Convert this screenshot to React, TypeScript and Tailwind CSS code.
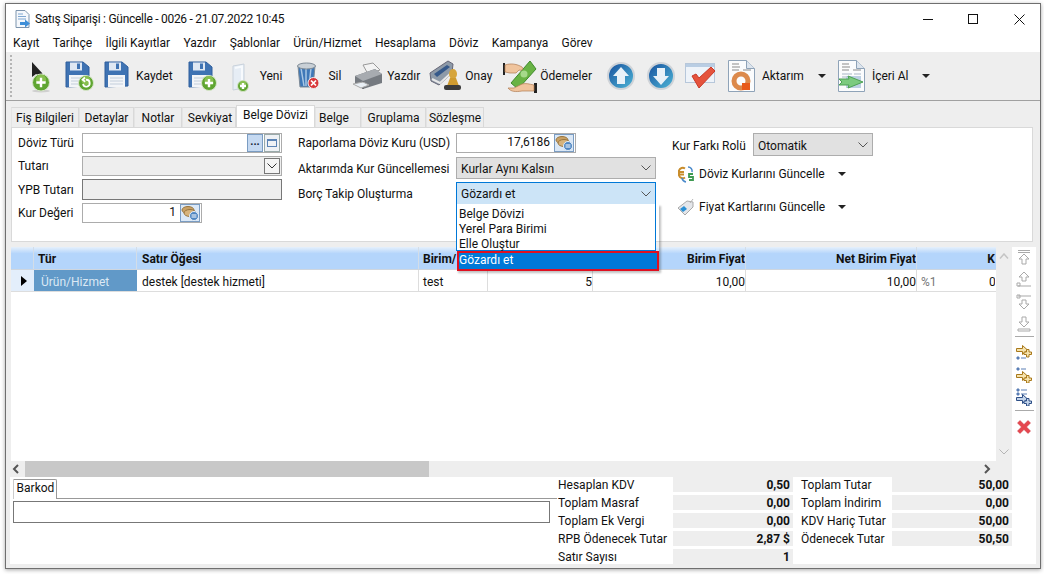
import React from "react";

const F = "font-['Roboto','Liberation_Sans',sans-serif]";

function Badge({ cx, cy, r = 7, kind = "plus" }: { cx: number; cy: number; r?: number; kind?: "plus" | "redo" }) {
  return (
    <g>
      <circle cx={cx} cy={cy} r={r} fill="#5fa531" stroke="#d5e4c8" strokeWidth="1" />
      <circle cx={cx} cy={cy - r / 3} r={r * 0.6} fill="#9acb5c" opacity="0.7" />
      {kind === "plus" ? (
        <path d={`M${cx - r * 0.55} ${cy}h${r * 1.1}M${cx} ${cy - r * 0.55}v${r * 1.1}`} stroke="#fff" strokeWidth="2.4" />
      ) : (
        <path d={`M${cx - 3} ${cy + 1}a3.4 3.4 0 1 0 3-4.2M${cx - 1} ${cy - 5.5}l-2.4 2.3 2.6 2`} stroke="#fff" strokeWidth="1.8" fill="none" />
      )}
    </g>
  );
}

function Floppy({ badge }: { badge?: "plus" | "redo" }) {
  return (
    <svg width="29" height="30" viewBox="0 0 29 30" className="shrink-0 block">
      <path d="M1 1h17l6 5v19l-23 1z" fill="#3f73b3" stroke="#2f5f9d" />
      <rect x="5" y="1.5" width="12" height="8" fill="#dfe8f3" />
      <rect x="12" y="2.5" width="3" height="5.5" fill="#3f73b3" />
      <rect x="4" y="14" width="17" height="12" fill="#f3f5f8" />
      <path d="M6 17h13M6 20h13M6 23h13" stroke="#c3cedb" />
      {badge && <Badge cx={21} cy={22} r={7.5} kind={badge} />}
    </svg>
  );
}

function PointerAdd() {
  return (
    <svg width="24" height="32" viewBox="0 0 24 32" className="shrink-0 block">
      <path d="M2 1v15l4-3 3 1.5 3.500-2z" fill="#222" />
      <ellipse cx="11" cy="30" rx="9" ry="1.5" fill="#cfcfcf" />
      <Badge cx={11} cy={21.5} r={8.5} />
    </svg>
  );
}

function BlankAdd() {
  return (
    <svg width="20" height="30" viewBox="0 0 20 30" className="shrink-0 block">
      <path d="M2 3l11-2v24l-11 2z" fill="#e6edf5" stroke="#c9d2dc" />
      <path d="M4 5l7-1.500v18" fill="none" stroke="#f7fafd" strokeWidth="2" />
      <Badge cx={12} cy={23} r={5.5} />
    </svg>
  );
}

function Trash() {
  return (
    <svg width="24" height="30" viewBox="0 0 24 30" className="shrink-0 block">
      <path d="M2 5h17l-2 21H4z" fill="#3e78b8" stroke="#7f8b96" />
      <path d="M5 7l3 18M10 7v18M15 7l-2 18" stroke="#a7c6e4" strokeWidth="1.5" />
      <ellipse cx="10.5" cy="5" rx="9" ry="3" fill="#c9d0d6" stroke="#7f8b96" />
      <circle cx="17.5" cy="22" r="5.5" fill="#d8373a" stroke="#eee" />
      <path d="M15 19.500l5 5M20 19.500l-5 5" stroke="#fff" strokeWidth="1.7" />
    </svg>
  );
}

function Printer() {
  return (
    <svg width="32" height="28" viewBox="0 0 32 28" className="shrink-0 block">
      <path d="M11 3l10-2 7 7-12 4z" fill="#f3f3f3" stroke="#999" />
      <path d="M3 14l20-7 7 5v9L11 27 3 21z" fill="#757a80" />
      <path d="M3 14l8 5 19-7-7-5z" fill="#a7abb0" />
      <path d="M11 19v8" stroke="#4e5156" />
      <path d="M1 22l8 4 8-3-6-3z" fill="#e8eef4" stroke="#aaa" />
    </svg>
  );
}

function Stamp() {
  return (
    <svg width="33" height="32" viewBox="0 0 33 32" className="shrink-0 block">
      <path d="M1 13L19 1l5 3-1 9-13 12-8-4z" fill="#8e9aa8" stroke="#667" />
      <path d="M5 14l13-9 3 2-13 10z" fill="#36598a" />
      <path d="M3 19l8 4 11-10" stroke="#e8e8e8" strokeWidth="2" fill="none" />
      <ellipse cx="24" cy="14" rx="4" ry="5" fill="#d6a53c" />
      <path d="M21 18h6l3 8H18z" fill="#cf9b30" />
      <rect x="15" y="25" width="17" height="5" rx="2" fill="#3b3b3b" />
    </svg>
  );
}

function Money() {
  return (
    <svg width="34" height="34" viewBox="0 0 34 34" className="shrink-0 block">
      <path d="M8 24L27 2l6 8-18 20z" fill="#69b344" stroke="#3f8a2c" />
      <circle cx="21" cy="15" r="3.5" fill="#a6d98a" />
      <rect x="0" y="4" width="2" height="12" fill="#222" />
      <path d="M2 6c6-2 12-1 17 2 2 2 0 4-3 3l-3 3H7l-5-1z" fill="#f0c49d" stroke="#b07b52" strokeWidth="0.7" />
      <rect x="31" y="24" width="3" height="10" fill="#222" />
      <path d="M31 26c-5-1-8-2-12-1l-8 4-6 0c3 4 8 4 14 3l12 0z" fill="#f0c49d" stroke="#b07b52" strokeWidth="0.7" />
    </svg>
  );
}

function Round({ down }: { down?: boolean }) {
  const id = down ? "rd" : "ru";
  return (
    <svg width="28" height="28" viewBox="0 0 28 28" className="shrink-0 block">
      <defs>
        <linearGradient id={id} x1="0" y1="0" x2="1" y2="1">
          <stop offset="0" stopColor="#174f9d" />
          <stop offset="1" stopColor="#4fb8d8" />
        </linearGradient>
      </defs>
      <circle cx="14" cy="14" r="13" fill={`url(#${id})`} stroke="#cfd3d8" strokeWidth="2" />
      {down ? <path d="M10 6h8v8h4l-8 9-8-9h4z" fill="#e9f1f8" /> : <path d="M14 5l8 9h-4v8h-8v-8H6z" fill="#e9f1f8" />}
    </svg>
  );
}

function CheckWindow() {
  return (
    <svg width="32" height="28" viewBox="0 0 32 28" className="shrink-0 block">
      <rect x="0.5" y="1.5" width="29" height="19" fill="#eef3f9" stroke="#b7c7da" />
      <rect x="1" y="2" width="28" height="3" fill="#b9cde3" />
      <path d="M7 14l4-2 3 4 12-11 4 4-16 17z" fill="#e5533d" stroke="#c83a29" />
    </svg>
  );
}

function DocBase({ children }: { children: React.ReactNode }) {
  return (
    <svg width="27" height="32" viewBox="0 0 27 32" className="shrink-0 block">
      <path d="M0.5 0.500h18l8 8v23h-26z" fill="#fbfcfd" stroke="#8fa3b8" />
      <path d="M18.500 0.500v8h8" fill="#dde5ee" stroke="#8fa3b8" />
      <path d="M4 4h7M4 7h8M4 10h7M15 10h8" stroke="#8b8b8b" />
      {children}
    </svg>
  );
}

function Coins() {
  return (
    <svg width="18" height="18" viewBox="0 0 18 18" className="block">
      <ellipse cx="7" cy="6" rx="6" ry="3.5" fill="#c9a165" stroke="#98753f" />
      <ellipse cx="9" cy="9" rx="6" ry="3.5" fill="#d7b37b" stroke="#98753f" />
      <circle cx="13" cy="12" r="4.5" fill="#4e86c2" stroke="#e4eef8" />
      <path d="M10.500 11h5M15.500 13h-5" stroke="#fff" />
    </svg>
  );
}

function CoinButton() {
  return (
    <div className="w-[20px] h-[18px] mr-[1px] border border-[#7a9cc2] bg-[#dbe8f6] flex items-center justify-center shrink-0">
      <Coins />
    </div>
  );
}

function Caret({ ml }: { ml: string }) {
  return <span className={`${ml} block w-0 h-0 border-x-[4px] border-x-transparent border-t-[4px] border-t-[#222] shrink-0`} />;
}

function Chevron({ color = "#555" }: { color?: string }) {
  return (
    <svg width="10" height="6" viewBox="0 0 10 6" className="shrink-0 block">
      <path d="M0.5 0.500L5 5l4.500-4.500" fill="none" stroke={color} />
    </svg>
  );
}

const MENU = ["Kayıt", "Tarihçe", "İlgili Kayıtlar", "Yazdır", "Şablonlar", "Ürün/Hizmet", "Hesaplama", "Döviz", "Kampanya", "Görev"];
const TABS = [
  { t: "Fiş Bilgileri", w: "w-[68px]" },
  { t: "Detaylar", w: "w-[55px]" },
  { t: "Notlar", w: "w-[48px]" },
  { t: "Sevkiyat", w: "w-[54px] pl-[2px]" },
  { t: "Belge Dövizi", w: "w-[79px]", active: true },
  { t: "Belge", w: "w-[46px] pr-[8px]" },
  { t: "Gruplama", w: "w-[65px]" },
  { t: "Sözleşme", w: "w-[58px]" },
];
const TOTALS = [
  ["Hesaplan KDV", "0,50", "Toplam Tutar", "50,00"],
  ["Toplam Masraf", "0,00", "Toplam İndirim", "0,00"],
  ["Toplam Ek Vergi", "0,00", "KDV Hariç Tutar", "50,00"],
  ["RPB Ödenecek Tutar", "2,87 $", "Ödenecek Tutar", "50,50"],
  ["Satır Sayısı", "1", "", ""],
];

function Toolbar() {
  return (
    <div className="h-[49px] bg-[#eeeeee] border-b border-[#a0a0a0] flex items-center">
      <div className="w-[3px] h-[42px] ml-[4px] border-l-2 border-dotted border-[#b5b5b5]" />
      <div className="ml-[17px] mt-[2px]"><PointerAdd /></div>
      <div className="ml-[11px]"><Floppy badge="redo" /></div>
      <div className="ml-[10px]"><Floppy /></div>
      <span className="ml-[3px]">Kaydet</span>
      <div className="ml-[15px]"><Floppy badge="plus" /></div>
      <div className="ml-[14px] mt-[4px]"><BlankAdd /></div>
      <span className="ml-[9px]">Yeni</span>
      <div className="ml-[14px]"><Trash /></div>
      <span className="ml-[8px]">Sil</span>
      <div className="ml-[11px]"><Printer /></div>
      <span className="ml-[3px]">Yazdır</span>
      <div className="ml-[9px]"><Stamp /></div>
      <span className="ml-[3px]">Onay</span>
      <div className="ml-[11px]"><Money /></div>
      <span className="ml-[3px]">Ödemeler</span>
      <div className="ml-[15px]"><Round /></div>
      <div className="ml-[12px]"><Round down /></div>
      <div className="ml-[10px]"><CheckWindow /></div>
      <div className="ml-[11px]">
        <DocBase>
          <circle cx="13" cy="21" r="7" fill="none" stroke="#dc8a4c" strokeWidth="5" />
          <path d="M14 23h8v7h-8z" fill="#e85a1a" />
        </DocBase>
      </div>
      <span className="ml-[7px]">Aktarım</span>
      <Caret ml="ml-[14px]" />
      <div className="ml-[12px]">
        <DocBase>
          <path d="M4 14h10M4 17h10M16 14h7M16 17h7" stroke="#a9b7c6" />
          <rect x="8" y="16" width="15" height="12" fill="#bcd0e2" />
          <path d="M1 19h10l-1-3 15 6-15 6 1-3H1l3-3z" fill="#7ccb7f" stroke="#4da155" />
        </DocBase>
      </div>
      <span className="ml-[7px]">İçeri Al</span>
      <Caret ml="ml-[13px]" />
    </div>
  );
}

function FormPanel() {
  return (
    <div className="ml-[5px] w-[1022px] h-[115px] bg-white border border-[#d9d9d9] flex relative">
      <div className="w-[270px] ml-[6px] pt-[5px] flex flex-col">
        <div className="flex h-[20px] items-center">
          <span className="w-[64px]">Döviz Türü</span>
          <div className="w-[200px] h-[20px] border border-[#acacac] flex justify-end">
            <div className="w-[16px] h-[18px] bg-[#c5d9f1] border border-[#7a9cc2] text-[#123] font-bold text-[11px] leading-[14px] text-center">...</div>
            <div className="w-[16px] h-[18px] ml-[1px] mr-[1px] bg-[#eef1f5] border border-[#9aa] flex items-center justify-center">
              <span className="w-[10px] h-[8px] border border-[#5b83b5] border-t-2" />
            </div>
          </div>
        </div>
        <div className="flex h-[20px] mt-[3px] items-center">
          <span className="w-[64px]">Tutarı</span>
          <div className="w-[200px] h-[20px] border border-[#acacac] bg-[#eeeeee] flex justify-end items-center">
            <div className="w-[16px] h-[16px] mr-[1px] border border-[#777] bg-[#f4f4f4] flex items-center justify-center"><Chevron color="#333" /></div>
          </div>
        </div>
        <div className="flex h-[21px] mt-[3px] items-center">
          <span className="w-[64px]">YPB Tutarı</span>
          <div className="w-[200px] h-[21px] border border-[#777] bg-[#eeeeee]" />
        </div>
        <div className="flex h-[20px] mt-[3px] items-center">
          <span className="w-[64px]">Kur Değeri</span>
          <div className="w-[120px] h-[20px] border border-[#acacac] flex justify-end items-start">
            <span className="mr-[4px] leading-[17px]">1</span>
            <CoinButton />
          </div>
        </div>
      </div>

      <div className="w-[358px] ml-[10px] pt-[5px] flex flex-col">
        <div className="flex h-[20px] items-center">
          <span className="w-[158px]">Raporlama Döviz Kuru (USD)</span>
          <div className="w-[120px] h-[20px] border border-[#acacac] flex justify-end items-start">
            <span className="mr-[4px] leading-[17px]">17,6186</span>
            <CoinButton />
          </div>
        </div>
        <div className="flex h-[22px] mt-[4px] items-center">
          <span className="w-[158px] mt-[2px]">Aktarımda Kur Güncellemesi</span>
          <div className="w-[200px] h-[22px] border border-[#adadad] bg-[#e1e1e1] flex items-center justify-between px-[4px]">
            <span className="mt-[2px]">Kurlar Aynı Kalsın</span>
            <Chevron />
          </div>
        </div>
        <div className="flex h-[23px] mt-[3px] items-center">
          <span className="w-[158px]">Borç Takip Oluşturma</span>
          <div className="w-[200px] h-[23px] border border-[#0078d7] bg-[#cce4f7] flex items-center justify-between px-[4px]">
            <span>Gözardı et</span>
            <Chevron />
          </div>
        </div>
      </div>

      <div className="ml-[16px] pt-[5px] flex flex-col">
        <div className="flex h-[23px] items-center">
          <span className="w-[81px] mt-[2px]">Kur Farkı Rolü</span>
          <div className="w-[120px] h-[23px] border border-[#adadad] bg-[#e1e1e1] flex items-center justify-between px-[4px]">
            <span className="mt-[2px]">Otomatik</span>
            <Chevron />
          </div>
        </div>
        <div className="flex items-center h-[18px] mt-[9px] ml-[5px]">
          <svg width="18" height="18" viewBox="0 0 18 18" className="shrink-0 block">
            <path d="M8 3.500A4 4 0 0 0 2 5.500v5a4 4 0 0 0 6 2M2 7h5M2 9.500h5" fill="none" stroke="#c98d2c" strokeWidth="2" />
            <path d="M15 7a4 4 0 0 0-4-5M5 13a5 5 0 0 0 4 4" fill="none" stroke="#4a8acb" strokeWidth="1.5" />
            <path d="M16 9h-4v3h4v3h-4" fill="none" stroke="#3f9a52" strokeWidth="1.8" />
          </svg>
          <span className="ml-[4px]">Döviz Kurlarını Güncelle</span>
          <Caret ml="ml-[13px]" />
        </div>
        <div className="flex items-center h-[18px] mt-[15px] ml-[5px]">
          <svg width="18" height="18" viewBox="0 0 18 18" className="shrink-0 block">
            <path d="M1 10l9-7 6 1 0 5-8 8z" fill="#e4e6ea" stroke="#a9a9a9" />
            <path d="M3 11l4-3 3 3-4 3z" fill="#2a8fd4" />
            <path d="M13 5l3-4" stroke="#b5b5b5" />
          </svg>
          <span className="ml-[4px]">Fiyat Kartlarını Güncelle</span>
          <Caret ml="ml-[13px]" />
        </div>
      </div>

      <div className="absolute left-[444px] top-[76px] w-[203px] h-[67px] z-10 shadow-[2px_2px_2px_rgba(0,0,0,0.25)]">
        <div className="w-[200px] h-[47px] bg-white border border-[#0078d7] border-t-0 flex flex-col pl-[2px] pt-[3px]">
          <span className="h-[15px] leading-[15px]">Belge Dövizi</span>
          <span className="h-[15px] leading-[15px]">Yerel Para Birimi</span>
          <span className="h-[15px] leading-[15px]">Elle Oluştur</span>
        </div>
        <div className="ml-[1px] w-[202px] h-[20px] border-2 border-[#e01020] bg-[#0078d7] text-white leading-[15px]">Gözardı et</div>
      </div>
    </div>
  );
}

function GridHead({ w, right, children }: { w: string; right?: boolean; children?: React.ReactNode }) {
  return (
    <div className={`${w} shrink-0 h-full border-r border-[#d3dde8] font-bold flex items-center overflow-hidden pt-[2px] ${right ? "justify-end" : "pl-[4px]"}`}>
      {children}
    </div>
  );
}

function GridCell({ w, right, children }: { w: string; right?: boolean; children?: React.ReactNode }) {
  return (
    <div className={`${w} shrink-0 h-full border-r border-[#dddddd] flex items-center overflow-hidden pt-[2px] ${right ? "justify-end" : "pl-[4px]"}`}>
      {children}
    </div>
  );
}

function Grid() {
  return (
    <div className="w-[985px] bg-white overflow-hidden">
      <div className="h-[23px] flex bg-[linear-gradient(#e6f0fb_0%,#b4d5fb_30%,#b4d5fb_100%)] border-b border-[#cfd6de] text-[#111]">
        <GridHead w="w-[23px]" />
        <GridHead w="w-[103px]">Tür</GridHead>
        <GridHead w="w-[282px]"><span className="ml-[1px]">Satır Öğesi</span></GridHead>
        <GridHead w="w-[69px]">Birim/</GridHead>
        <GridHead w="w-[105px]" right />
        <GridHead w="w-[153px]" right>Birim Fiyat</GridHead>
        <GridHead w="w-[171px]" right>Net Birim Fiyat</GridHead>
        <div className="w-[78px] shrink-0 font-bold flex items-center justify-end pt-[2px]">K</div>
      </div>
      <div className="h-[22px] flex border-b border-[#dddddd]">
        <div className="w-[23px] shrink-0 h-full bg-[#e3eefb] flex items-center pl-[10px]">
          <span className="block w-0 h-0 border-y-[5px] border-y-transparent border-l-[6px] border-l-black" />
        </div>
        <div className="w-[103px] shrink-0 h-full bg-[#6199c8] text-[#dbe8f4] flex items-center pl-[7px] pt-[2px]">Ürün/Hizmet</div>
        <GridCell w="w-[282px]"><span className="ml-[1px]">destek [destek hizmeti]</span></GridCell>
        <GridCell w="w-[69px]">test</GridCell>
        <GridCell w="w-[105px]" right>5</GridCell>
        <GridCell w="w-[153px]" right>10,00</GridCell>
        <GridCell w="w-[171px]" right>10,00</GridCell>
        <div className="w-[78px] shrink-0 flex items-center justify-between pl-[4px] pt-[2px] text-[#777]">
          <span>%1</span>
          <span className="text-[#111] w-[6px] overflow-hidden">0</span>
        </div>
      </div>
    </div>
  );
}

function Side() {
  const stroke = "#a9a9a9";
  const gold = { fill: "#f6e3ad", stroke: "#a9791b" };
  const arrow = "M0.500 3.500h6v-3l5 4.500-5 4.500v-3h-6z";
  const plus = "M10.500 4.500v2.500h-2.500v2.500h2.500v2.500h2.500v-2.500h2.500V7h-2.500V4.500z";
  return (
    <div className="w-[24px] bg-white flex flex-col items-center pt-[2px]">
      <svg width="16" height="16" viewBox="0 0 16 16" className="block"><path d="M2 1.500h12M2 3.500h12M8 5l5 5h-3v5H6v-5H3z" fill="none" stroke={stroke} /></svg>
      <svg width="16" height="16" viewBox="0 0 16 16" className="block mt-[6px]"><path d="M8 1L3 6h3v4h4V6h3zM2 15h13M1 12h3v3H1z" fill="none" stroke={stroke} /></svg>
      <svg width="16" height="16" viewBox="0 0 16 16" className="block mt-[7px]"><path d="M2 2h13M1 1h3v3H1zM8 15l5-5h-3V6H6v4H3z" fill="none" stroke={stroke} /></svg>
      <svg width="16" height="16" viewBox="0 0 16 16" className="block mt-[6px]"><path d="M6 1h4v5h3l-5 5-5-5h3zM2 13h12v2H2z" fill="none" stroke={stroke} /></svg>
      <div className="w-[19px] h-[1px] bg-[#aaaaaa] mt-[4px]" />
      <svg width="16" height="16" viewBox="0 0 16 16" className="block mt-[8px]"><path d={arrow} {...gold} /><path d={plus} {...gold} /><path d="M1 12h2v2H1zM5 13h5" fill="#5a7fb5" stroke="#5a7fb5" /></svg>
      <svg width="16" height="16" viewBox="0 0 16 16" className="block mt-[6px]"><path d="M1 1h2v2H1zM5 2h5" fill="#5a7fb5" stroke="#5a7fb5" /><g transform="translate(0 4)"><path d={arrow} {...gold} /><path d={plus} {...gold} /></g></svg>
      <svg width="16" height="18" viewBox="0 0 16 18" className="block mt-[5px]"><path d="M1 1h2v2H1zM5 2h6M1 5h2v2H1zM5 6h6" fill="#5a7fb5" stroke="#5a7fb5" /><g transform="translate(0 6)"><path d={arrow} fill="#c3d4ea" stroke="#2d4e86" /><path d={plus} fill="#c3d4ea" stroke="#2d4e86" /></g></svg>
      <div className="w-[19px] h-[1px] bg-[#aaaaaa] mt-[4px]" />
      <svg width="14" height="14" viewBox="0 0 14 14" className="block mt-[9px]"><path d="M3 0.500l4 4 4-4 2.500 2.500-4 4 4 4-2.500 2.500-4-4-4 4L0.500 11l4-4-4-4z" fill="#e6474f" stroke="#c9323a" strokeWidth="0.5" /></svg>
    </div>
  );
}

function Bottom() {
  return (
    <div className="ml-[4px] w-[1026px] h-[87px] bg-white flex">
      <div className="w-[547px] pl-[3px] pt-[2px] shrink-0">
        <div className="h-[20px] flex">
          <div className="w-[44px] h-[20px] border-t border-r border-[#999999] rounded-tr-[2px] text-center leading-[17px] border-l border-l-[#cccccc] pl-[1px]">Barkod</div>
          <div className="flex-1 border-b border-[#999999]" />
        </div>
        <div className="w-[537px] h-[22px] mt-[2px] border border-[#777777]" />
      </div>
      <div className="grid grid-cols-[115px_120px_8px_91px_120px] grid-rows-[repeat(5,15px)] gap-y-[3px] ml-[1px] h-[87px]">
        {TOTALS.map((r) => (
          <React.Fragment key={r[0]}>
            <span className="leading-[17px]">{r[0]}</span>
            <span className="bg-[#eeeeee] font-bold text-right pr-[3px] leading-[17px]">{r[1]}</span>
            <span />
            <span className="leading-[17px]">{r[2]}</span>
            {r[3] ? <span className="bg-[#eeeeee] font-bold text-right pr-[3px] leading-[17px]">{r[3]}</span> : <span />}
          </React.Fragment>
        ))}
      </div>
    </div>
  );
}

export default function App() {
  return (
    <div className={`w-[1044px] h-[574px] bg-white pt-[3px] pl-[5px] overflow-hidden text-[12px] leading-none text-[#111] ${F}`}>
      <div className="w-[1036px] h-[566px] border border-[#6f6f6f] bg-[#eeeeee] shadow-[0_1px_4px_rgba(0,0,0,0.35)] flex flex-col">
        <div className="h-[30px] bg-white flex items-center">
          <svg width="16" height="18" viewBox="0 0 16 18" className="ml-[9px] shrink-0 block">
            <path d="M1 0.500h9l4 4v13H1z" fill="#f5f8fc" stroke="#7d94ad" />
            <path d="M3 4h5M3 6.500h8M3 9h8" stroke="#7fa7d1" />
            <path d="M5 12h5v-2.500l5 4-5 4V15H5z" fill="#3f8fd8" />
          </svg>
          <span className="ml-[4px] tracking-[-0.27px]">Satış Siparişi : Güncelle - 0026 - 21.07.2022 10:45</span>
          <div className="ml-auto flex items-center mr-[15px]">
            <span className="block w-[10px] h-[1px] bg-[#111]" />
            <span className="block w-[10px] h-[10px] border border-[#111] ml-[35px]" />
            <svg width="11" height="11" viewBox="0 0 11 11" className="block ml-[36px]"><path d="M0.500 0.500l10 10M10.500 0.500l-10 10" stroke="#111" /></svg>
          </div>
        </div>
        <div className="h-[18px] bg-white flex items-center pl-[7px] gap-[13.3px]">
          {MENU.map((m) => <span key={m}>{m}</span>)}
        </div>
        <Toolbar />
        <div className="h-[26px] pl-[5px] flex items-end">
          {TABS.map((t) => (
            <div
              key={t.t}
              className={
                t.active
                  ? `${t.w} h-[22px] bg-white border-x border-t border-[#d9d9d9] text-center leading-[19px]`
                  : `${t.w} h-[20px] border-r border-t border-l border-[#d9d9d9] border-l-[#e4e4e4] text-center leading-[20px]`
              }
            >
              {t.t}
            </div>
          ))}
        </div>
        <FormPanel />
        <div className="h-[5px]" />
        <div className="h-[230px] flex ml-[5px]">
          <div className="w-[1001px] flex flex-col">
            <div className="h-[214px] flex">
              <Grid />
              <div className="w-[16px] flex flex-col items-center justify-between py-[6px]">
                <svg width="10" height="6" viewBox="0 0 10 6" className="block"><path d="M1 5.500L5 1l4 4.500" fill="none" stroke="#c4c4c4" strokeWidth="1.5" /></svg>
                <Chevron color="#b5b5b5" />
              </div>
            </div>
            <div className="h-[16px] flex items-center">
              <svg width="14" height="10" viewBox="0 0 14 10" className="shrink-0 block"><path d="M7 1L3 5l4 4" fill="none" stroke="#555" strokeWidth="2" /></svg>
              <div className="w-[404px] h-[16px] bg-[#c8c8c8]" />
              <svg width="14" height="10" viewBox="0 0 14 10" className="ml-[551px] shrink-0 block"><path d="M5 1l4 4-4 4" fill="none" stroke="#555" strokeWidth="2" /></svg>
            </div>
          </div>
          <Side />
        </div>
        <Bottom />
      </div>
    </div>
  );
}
